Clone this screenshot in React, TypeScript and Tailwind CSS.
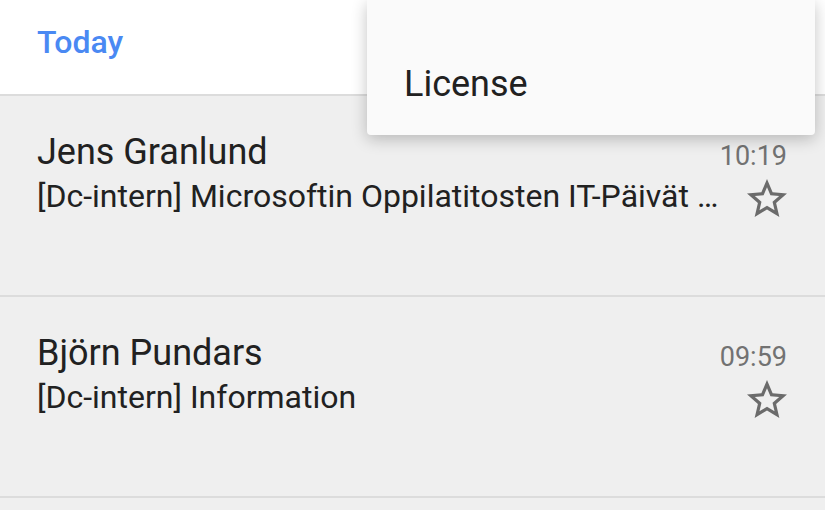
const ROWS = [
  {
    from: "Jens Granlund",
    subject: "[Dc-intern] Microsoftin Oppilatitosten IT-Päivät …",
    time: "10:19",
  },
  {
    from: "Björn Pundars",
    subject: "[Dc-intern] Information",
    time: "09:59",
  },
];

function StarOutline() {
  return (
    <svg width="48" height="48" viewBox="0 0 24 24" fill="#6b6b6b">
      <path d="M22 9.24l-7.19-.62L12 2 9.19 8.63 2 9.24l5.46 4.73L5.82 21 12 17.27 18.18 21l-1.63-7.03L22 9.24zM12 15.4l-3.76 2.27 1-4.28-3.32-2.88 4.38-.38L12 6.1l1.71 4.04 4.38.38-3.32 2.88 1 4.28L12 15.4z" />
    </svg>
  );
}

function MailRow({ from, subject, time }: { from: string; subject: string; time: string }) {
  return (
    <div className="flex h-[201px] border-b-2 border-[#dcdcdc] pl-[37px] pr-[34px]">
      <div className="flex-1 min-w-0 pt-[34px]">
        <div className="text-[36px] leading-[44px] text-[#212121]">{from}</div>
        <div className="text-[32px] leading-[44px] text-[#212121] whitespace-nowrap">
          {subject}
        </div>
      </div>
      <div className="flex flex-col items-end pt-[44px]">
        <div className="pr-[4px] text-[27px] leading-[32px] text-[#727272]">{time}</div>
        <div className="mt-[3px]">
          <StarOutline />
        </div>
      </div>
    </div>
  );
}

export default function App() {
  return (
    <div className="relative w-[825px] h-[510px] overflow-hidden bg-[#efefef] font-['Roboto',sans-serif]">
      {/* Section header */}
      <div className="h-[94px] bg-white pl-[37px] pt-[22px]">
        <span className="text-[32px] leading-[40px] font-medium text-[#4a89f3]">Today</span>
      </div>
      <div className="h-[2px] bg-[#dcdcdc]" />

      {ROWS.map((r) => (
        <MailRow key={r.from} {...r} />
      ))}

      {/* Overflow menu */}
      <div className="absolute left-[367px] top-0 w-[448px] h-[135px] rounded-b-[4px] bg-[#fafafa] pl-[37px] pt-[62px] shadow-[0_4px_16px_rgba(0,0,0,0.24)]">
        <span className="text-[36px] leading-[44px] text-[#212121]">License</span>
      </div>
    </div>
  );
}
